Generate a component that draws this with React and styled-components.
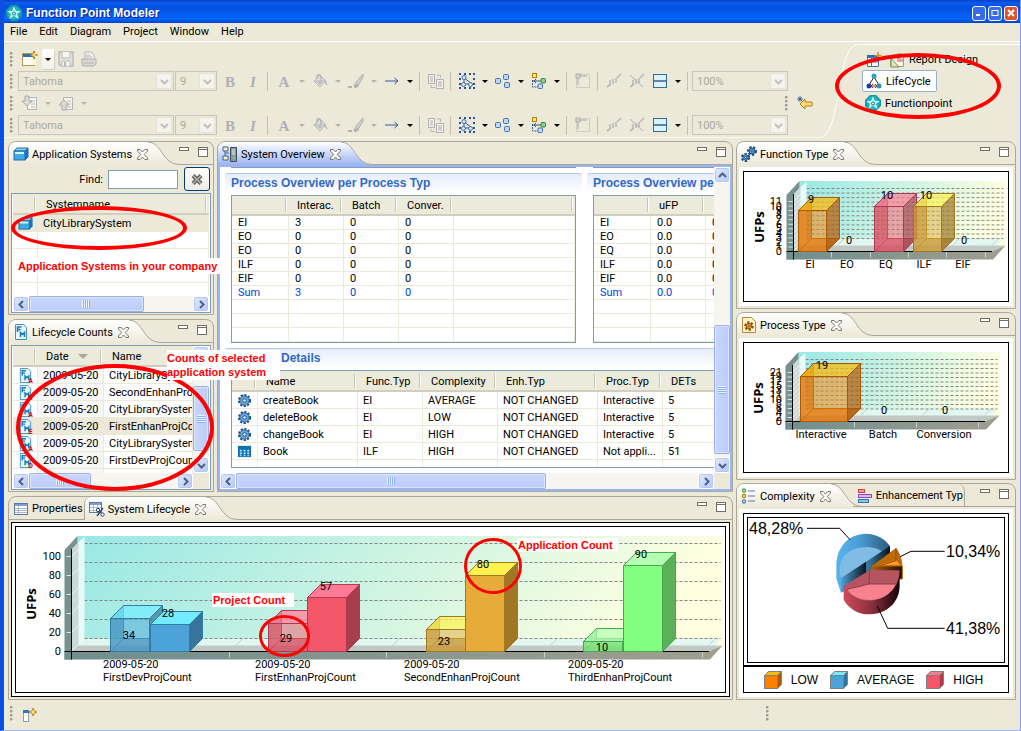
import styled, { createGlobalStyle, css } from 'styled-components';

const GlobalStyle = createGlobalStyle`
  *, *::before, *::after {
    box-sizing: border-box;
  }
  body {
    margin: 0;
    background: #ece9d8;
  }
  body, button, input, select, table {
    font-family: Roboto, 'Liberation Sans', Arial, sans-serif;
    font-size: 11px;
    color: #000;
  }
  button {
    padding: 0;
    border: 0;
    background: none;
  }
  svg {
    display: block;
    flex: none;
  }
  svg text {
    font-family: Roboto, 'Liberation Sans', Arial, sans-serif;
    font-size: 11px;
  }
`;

/* ---------- window ---------- */

const Window = styled.div`
  display: flex;
  flex-direction: column;
  min-height: 100vh;
  background: #ece9d8;
  border-left: 4px solid #0a4fe0;
  border-right: 1px solid #7c9cf0;
  border-bottom: 1px solid #9ab5f1;
  overflow: hidden;
`;

const TitleBar = styled.header`
  display: flex;
  align-items: center;
  gap: 4px;
  height: 23px;
  margin-left: -4px;
  padding: 3px 2px 0 6px;
  background: linear-gradient(#0a3fc4 0, #0a5cf0 3px, #0050dd 7px, #0458ea 12px, #0566ff 19px, #0043c8 23px);
`;

const TitleText = styled.h1`
  flex: 1;
  margin: 0;
  color: #fff;
  font: bold 12px 'Liberation Sans', Arial, sans-serif;
  text-shadow: 1px 1px #0a1883;
`;

const TitleButton = styled.button`
  display: grid;
  place-items: center;
  width: 14px;
  height: 15px;
  margin-left: -2px;
  border: 1px solid #fff;
  border-radius: 3px;
  background: ${({ $close }) => ($close ? '#e0512c' : '#3a6be8')};
`;

const MenuBar = styled.nav`
  display: flex;
  align-items: center;
  gap: 12px;
  height: 19px;
  padding-left: 6px;
  border-bottom: 1px solid #fff;
`;

const MenuItem = styled.button`
  line-height: 16px;
`;

/* ---------- tool bars ---------- */

const CoolBar = styled.div`
  display: flex;
  height: 99px;
`;

const Bars = styled.div`
  flex: 1;
  min-width: 0;
  margin-bottom: 3px;
  padding: 6px 4px 0 6px;
  border-bottom: 1px solid #f8f7f2;
`;

const BarRow = styled.div`
  display: flex;
  align-items: center;
  height: 22px;
`;

const Grip = styled.span`
  flex: none;
  width: 3px;
  height: 15px;
  margin-right: 5px;
  margin-left: ${({ $end }) => ($end ? 'auto' : '0')};
  background: radial-gradient(circle at 1px 1px, #a09d90 1px, transparent 2px) 0 0 / 3px 4px;
`;

const Tool = styled.button`
  display: grid;
  flex: none;
  place-items: center;
  width: ${({ $menu }) => ($menu ? '24px' : '23px')};
  height: 20px;
`;

const MenuArrow = styled.button`
  display: grid;
  flex: none;
  place-items: center;
  width: 12px;
  height: 20px;
  ${({ $raised }) =>
    $raised &&
    css`
      border-radius: 2px;
      background: linear-gradient(#fff, #f3f1e8);
      box-shadow: 1px 1px #d4d0c0;
    `}
`;

const Separator = styled.span`
  flex: none;
  width: 1px;
  height: 19px;
  margin: 0 4px 0 3px;
  background: #c5c2b0;
`;

const ComboBox = styled.span`
  position: relative;
  flex: none;
  width: ${({ $width }) => $width}px;
  height: 20px;
  margin-right: 1px;
`;

const ComboSelect = styled.select`
  width: 100%;
  height: 20px;
  padding: 0 18px 0 4px;
  appearance: none;
  color: #aca899;
  background: #ece9d8;
  border: 1px solid #c9c7ba;
  border-radius: 0;
  opacity: 1;
`;

const ComboArrow = styled.span`
  position: absolute;
  top: 2px;
  right: 2px;
  display: grid;
  place-items: center;
  width: 16px;
  height: 16px;
  border: 1px solid #e4e2d6;
  background: #f4f3ee;
  pointer-events: none;
`;

const Perspectives = styled.div`
  position: relative;
  flex: none;
  width: 162px;
  margin-top: 2px;
  padding: 4px;
  border-top: 1px solid #fff;
`;

const PerspectiveRow = styled.div`
  display: flex;
  align-items: center;
  gap: 4px;
  height: 21px;
  padding-left: 4px;
`;

const PerspectiveButton = styled.button`
  display: flex;
  align-items: center;
  gap: 4px;
  height: 22px;
  padding: 0 5px 0 3px;
  ${({ $active }) =>
    $active &&
    css`
      background: #fff;
      border: 1px solid #98b0cc;
      border-radius: 2px;
    `}
`;

/* ---------- workbench ---------- */

const Workbench = styled.main`
  display: flex;
  flex: 1;
  gap: 3px;
  padding: 0 4px;
`;

const MainArea = styled.div`
  display: flex;
  flex: 1;
  flex-direction: column;
  gap: 4px;
  min-width: 0;
`;

const TopRow = styled.div`
  display: flex;
  gap: 3px;
`;

const Navigator = styled.div`
  display: flex;
  flex: none;
  flex-direction: column;
  gap: 4px;
  width: 206px;
`;

const ChartColumn = styled.div`
  display: flex;
  flex: none;
  flex-direction: column;
  gap: 3px;
  width: 280px;
`;

const Panel = styled.section`
  position: relative;
  display: flex;
  flex: ${({ $grow }) => ($grow ? '1' : 'none')};
  flex-direction: column;
  min-width: 0;
  border: 1px solid #aca899;
  border-radius: 8px 8px 0 0;
`;

const PanelHead = styled.div`
  display: flex;
  flex: none;
  height: 23px;
`;

const blueTab = css`
  background: linear-gradient(#fff, #9ab5f1);
`;

const plainTab = css`
  background: linear-gradient(#fff, #ece9d8);
`;

const Tab = styled.div`
  display: flex;
  flex: none;
  align-items: center;
  padding: 1px 0 0 4px;
  border-top-left-radius: 7px;
  border-bottom: 1px solid #aca899;
  white-space: nowrap;
  ${({ $active, $blue }) =>
    $active &&
    css`
      ${$blue ? blueTab : plainTab}
      border-bottom: 0;
    `}
  ${({ $divided }) => $divided && 'border-left: 1px solid #aca899;'}
  ${({ $last }) => $last && 'margin-left: -9px; border-right: 1px solid #aca899; border-top-right-radius: 7px;'}
`;

const TabLabel = styled.span`
  padding: 0 ${({ $wide }) => ($wide ? 5 : 1)}px 0 3px;
`;

const CloseButton = styled.button`
  padding: 0;
`;

const HeadRest = styled.div`
  display: flex;
  flex: 1;
  gap: 9px;
  justify-content: flex-end;
  padding: 5px 6px 0 0;
  border-bottom: 1px solid #aca899;
`;

const MinButton = styled.button`
  width: 10px;
  height: 4px;
  border: 1px solid #716f64;
  background: #fff;
`;

const MaxButton = styled.button`
  width: 10px;
  height: 10px;
  border: 1px solid #716f64;
  border-top-width: 3px;
  border-top-style: double;
  background: #fff;
`;

const FindRow = styled.div`
  display: flex;
  align-items: center;
  justify-content: flex-end;
  height: 28px;
  padding-right: 3px;
`;

const FindInput = styled.input`
  width: 70px;
  height: 19px;
  margin: 0 6px 0 5px;
  border: 1px solid #7f9db9;
  background: #fff;
`;

const ClearButton = styled.button`
  display: grid;
  place-items: center;
  width: 26px;
  height: 24px;
  border: 1px solid #003c74;
  border-radius: 3px;
  background: linear-gradient(#fff, #ecebe5);
`;

/* ---------- tables ---------- */

const ListBox = styled.div`
  display: flex;
  flex-direction: column;
  height: ${({ $height }) => $height}px;
  margin: ${({ $gap }) => $gap}px 2px 1px;
  padding: 0 1px;
  border: 1px solid #7f9db9;
  background: #fff;
`;

const ListRow = styled.div`
  display: flex;
  flex: 1;
  min-height: 0;
`;

const ListClip = styled.div`
  flex: 1;
  min-width: 0;
  overflow: hidden;
`;

const ListFoot = styled.div`
  display: flex;
  flex: none;
  background: #ece9d8;
`;

const DataTable = styled.table`
  width: 100%;
  table-layout: fixed;
  border-collapse: separate;
  border-spacing: 0;
  white-space: nowrap;
`;

const Th = styled.th`
  height: ${({ $dense }) => ($dense ? 20 : 21)}px;
  padding: 2px 0 0 8px;
  overflow: hidden;
  font-weight: normal;
  line-height: 14px;
  text-align: left;
  background:
    linear-gradient(#c7c5b2, #c7c5b2) right 3px center / 1px 14px no-repeat,
    linear-gradient(#fff, #fff) right 2px center / 1px 14px no-repeat,
    #ebeadb;
  border-bottom: 2px solid #d2cebd;
`;

const Td = styled.td`
  height: ${({ $dense }) => ($dense ? 14 : 17)}px;
  padding: 1px 0 0 ${({ $dense }) => ($dense ? 6 : 5)}px;
  overflow: hidden;
  line-height: 12px;
  color: ${({ $sum }) => ($sum ? '#0046d5' : '#000')};
  background: ${({ $selected, $sorted }) => ($selected ? '#ece9d8' : $sorted ? '#f7f7f7' : '#fff')};
  border-right: 1px solid #ece9d8;
  border-bottom: 1px solid #ece9d8;

  svg {
    width: 15px;
    height: 15px;
  }
`;

const SortMark = styled.span`
  display: inline-block;
  margin-left: 9px;
  border: 5px solid transparent;
  border-top-color: #aca899;
  border-bottom: 0;
  vertical-align: middle;
`;

/* ---------- scroll bars ---------- */

const ScrollTrack = styled.div`
  display: flex;
  flex: ${({ $vertical }) => ($vertical ? 'none' : '1')};
  flex-direction: ${({ $vertical }) => ($vertical ? 'column' : 'row')};
  ${({ $vertical }) => ($vertical ? 'width' : 'height')}: 16px;
  min-width: 0;
  background: #f6f5f0;
`;

const ScrollButton = styled.button`
  display: grid;
  flex: none;
  place-items: center;
  width: 16px;
  height: 16px;
  border: 1px solid #fff;
  border-radius: 3px;
  background: linear-gradient(135deg, #e1eafe, #b5c8f7);
  box-shadow: inset 0 0 0 1px #b4c8f6;
`;

const ScrollLane = styled.div`
  display: flex;
  flex: 1;
  flex-direction: ${({ $vertical }) => ($vertical ? 'column' : 'row')};
  min-height: 0;
`;

const ScrollSpace = styled.span`
  flex: 0 0 ${({ $size }) => $size}%;
`;

const ScrollThumb = styled.div`
  display: grid;
  flex: 0 0 ${({ $size }) => $size}%;
  place-items: center;
  border: 1px solid #98b1ea;
  border-radius: 2px;
  background: linear-gradient(${({ $vertical }) => ($vertical ? '90deg' : '180deg')}, #c9d7fd, #bccbf9);
  box-shadow: inset 0 0 0 1px #dbe5ff;
`;

const ThumbGrip = styled.span`
  width: 8px;
  height: 8px;
  background: repeating-linear-gradient(
    ${({ $vertical }) => ($vertical ? '180deg' : '90deg')},
    #eef4fe 0 1px,
    #8cb0f8 1px 2px
  );
`;

/* ---------- editor ---------- */

const EditorBody = styled.div`
  display: flex;
  flex: 1;
  flex-direction: column;
  border: 2px solid #9ab5f1;
  background: #fff;
`;

const EditorMain = styled.div`
  display: flex;
  flex: 1;
  min-height: 0;
`;

const EditorPage = styled.div`
  flex: 1;
  min-width: 0;
  height: 306px;
  padding-left: 5px;
  overflow: hidden;
`;

const SectionRow = styled.div`
  display: flex;
  gap: 5px;
`;

const FormSection = styled.div`
  flex: none;
  width: ${({ $width }) => $width}px;
  margin-bottom: 5px;
`;

const PreviousEdge = styled.div`
  height: 1px;
  margin: 0 6px 5px;
  background: #7f9db9;
`;

const SectionTitle = styled.h2`
  height: 20px;
  margin: 0 0 2px;
  padding: 2px 0 0 6px;
  border-top: 1px solid #b5c8f4;
  border-radius: 3px 3px 0 0;
  background: linear-gradient(#e6edfc, #fff);
  color: #316ac5;
  font: bold 12px 'Liberation Sans', Arial, sans-serif;
  line-height: 15px;
  white-space: nowrap;
`;

const SectionTable = styled.div`
  height: ${({ $height }) => $height}px;
  margin: 0 6px;
  border: 1px solid #7f9db9;
  overflow: hidden;
`;

const ScrollCorner = styled.span`
  flex: none;
  width: 16px;
  background: #ece9d8;
`;

/* ---------- charts ---------- */

const ChartPaper = styled.div`
  margin: 2px;
  padding: ${({ $tight }) => ($tight ? '0' : '4px')};
  background: #fff;
`;

const Frame = styled.div`
  padding: ${({ $double }) => ($double ? '3px' : '0')};
  border: 1px solid #000;
`;

const InnerFrame = styled.div`
  border: 1px solid #000;
`;

const PieFrame = styled.div`
  border: 1px solid #000;
`;

const PieArea = styled.div`
  padding: 3px 3px 2px;
  border-bottom: 2px solid #000;
`;

const ChartSvg = styled.svg`
  width: 100%;
  height: ${({ $height }) => $height}px;
`;

const Legend = styled.ul`
  display: flex;
  align-items: center;
  justify-content: center;
  gap: 12px;
  height: 25px;
  margin: 0;
  padding: 0 5px 0 0;
  list-style: none;
`;

const LegendItem = styled.li`
  display: flex;
  align-items: center;
  gap: 9px;
  font: 12px 'Liberation Sans', Arial, sans-serif;
`;

/* ---------- annotations ---------- */

const Ring = styled.span`
  position: absolute;
  z-index: 4;
  left: ${({ $x }) => $x}px;
  top: ${({ $y }) => $y}px;
  width: ${({ $w }) => $w}px;
  height: ${({ $h }) => $h}px;
  border: 4px solid #f00;
  border-radius: 50%;
  pointer-events: none;
`;

const Note = styled.p`
  position: absolute;
  z-index: 5;
  left: ${({ $x }) => $x}px;
  top: ${({ $y }) => $y}px;
  margin: 0;
  padding: 1px 14px 1px ${({ $indent }) => $indent || 0}px;
  background: #fff;
  color: #f00;
  font: bold 11px 'Liberation Sans', Arial, sans-serif;
  line-height: 14px;
  white-space: nowrap;
`;

const StatusBar = styled.footer`
  display: flex;
  height: 30px;
  padding: 6px 0 0 6px;
`;

const StatusLeft = styled.div`
  display: flex;
  flex: 1;
`;

const StatusRight = styled.div`
  width: 254px;
`;

/* ---------- icons ---------- */

const Icon = ({ size = 16, children }) => (
  <svg width={size} height={size} viewBox='0 0 16 16' fill='none' aria-hidden='true'>
    {children}
  </svg>
);

const LogoIcon = () => (
  <Icon>
    <path d='M5 0h6l5 5v6l-5 5H5l-5-5V5z' fill='#1797a6' />
    <circle cx='8' cy='8' r='6.400' fill='#20b6c4' />
    <path d='M8 3l-3.500 9.500L13 6.500H3l8.500 6z' fill='none' stroke='#d8ffff' strokeWidth='1.200' />
    <circle cx='8' cy='8.500' r='1.500' fill='#e5ffff' stroke='#087888' />
  </Icon>
);

const NewIcon = () => (
  <Icon>
    <rect x='.5' y='2.500' width='12' height='12' fill='#fdfdf5' stroke='#b29a55' />
    <path d='M1 3h12v3H1z' fill='#2a72bd' />
    <path d='M12 0v8M8.500 4h7' stroke='#c08a10' strokeWidth='2' />
    <path d='M12 2v4M10 4h4' stroke='#ffe98a' />
    <path d='M10 14V9l4-1v6' fill='#fff6cf' />
  </Icon>
);

const SaveIcon = () => (
  <Icon>
    <path d='M1 1h14v14H3l-2-2z' fill='#e3e2dc' stroke='#b8b8b8' strokeWidth='1.400' />
    <path d='M4 1v6h8V1M4 15v-5h8v5' fill='#f5f4ef' stroke='#bbb' />
    <path d='M6 11h2v4H6z' fill='#b5b5b5' />
  </Icon>
);

const PrintIcon = () => (
  <Icon>
    <path d='M4 8V1h6l3 3v4' fill='#f5f4ef' stroke='#b5b5b5' />
    <path d='M1 8h14v5l-2 2H2l-1-1z' fill='#d8d7d0' stroke='#b0b0b0' />
    <path d='M3 12h10M5 4h4M5 6h6' stroke='#b5b5b5' />
  </Icon>
);

const Letter = ({ italic, children }) => (
  <Icon>
    <text
      x='8'
      y='13.500'
      textAnchor='middle'
      fill='#b0b0b4'
      style={{ font: `${italic ? 'italic ' : ''}bold 15px "Liberation Serif", serif` }}
    >
      {children}
    </text>
  </Icon>
);

const BucketIcon = () => (
  <Icon>
    <path d='M2 8l6-6 6 6-6 6z' fill='#dfded8' stroke='#b8b8b8' />
    <path d='M5 6c-1-5 3-6 4-2v4M3 8h10l2 4' stroke='#b0b0b0' strokeWidth='1.200' />
    <path d='M5 9h6l-3 3z' fill='#bbb' />
  </Icon>
);

const BrushIcon = () => (
  <Icon>
    <path d='M15 1L9 8l-3 5 5-2 4-7z' fill='#d0d0cc' stroke='#b0b0b0' />
    <path d='M0 14h4M6 14c2 0 4-1 4-3' stroke='#b0b0b0' strokeWidth='2' />
  </Icon>
);

const LineIcon = () => (
  <Icon>
    <path d='M1 8h13M10.500 5l3.500 3-3.500 3' stroke='#2c5ba8' />
  </Icon>
);

const CopyIcon = () => (
  <Icon>
    <path d='M.5 1.500h6v9h-6zM8.500 6.500h7v9h-7z' fill='#f3f2ec' stroke='#b0b0b0' />
    <path d='M2 4h3M2 6h3M2 8h3M10 9h4M10 11h4M10 13h4' stroke='#b0b0b0' />
    <path d='M9 2h3.500v3M3 12v2.500h4' stroke='#b8b8b8' />
  </Icon>
);

const SelectAllIcon = () => (
  <Icon>
    <path
      d='M0 0h2v2H0zM5 0h2v2H5zM10 0h2v2h-2zM14 0h2v2h-2zM0 5h2v2H0zM14 5h2v2h-2zM0 10h2v2H0zM14 10h2v2h-2zM0 14h2v2H0zM5 14h2v2H5zM10 14h2v2h-2zM14 14h2v2h-2z'
      fill='#2f5594'
    />
    <path d='M4 4l9 7M5 5v6h6' stroke='#2f5594' />
    <circle cx='5' cy='4.500' r='2' fill='#d5e6fb' stroke='#4470b0' />
    <circle cx='4.500' cy='11.500' r='2' fill='#d5e6fb' stroke='#4470b0' />
    <circle cx='11.500' cy='11.500' r='2' fill='#d5e6fb' stroke='#4470b0' />
  </Icon>
);

const AlignIcon = () => (
  <Icon>
    <g fill='#bcd6f5' stroke='#4470b0'>
      <rect x='.5' y='5.500' width='5' height='5' rx='1' />
      <rect x='8.500' y='1.500' width='5' height='5' rx='1' />
      <rect x='9.500' y='9.500' width='5' height='5' rx='1' />
    </g>
  </Icon>
);

const TreeIcon = () => (
  <Icon>
    <rect x='1.500' y='.5' width='4' height='4' fill='#ffe07c' stroke='#b08410' />
    <path d='M2 8h8M5 6L3 8l2 2' stroke='#2f5594' />
    <path d='M1.500 7v7h6' stroke='#2f5594' strokeDasharray='2 1' />
    <rect x='10' y='5.500' width='4.500' height='4.500' rx='1' fill='#8fd08a' stroke='#3c8040' />
    <rect x='7' y='11' width='4.500' height='4.500' rx='1' fill='#c6dcf8' stroke='#4470b0' />
  </Icon>
);

const SnapIcon = () => (
  <Icon>
    <rect x='1.500' y='1.500' width='13' height='13' stroke='#b5b5b5' strokeDasharray='1 1' />
    <path d='M3 4v8M4 3h8' stroke='#a9a9a9' />
    <rect x='1' y='1' width='4' height='4' fill='#d5d5d0' stroke='#b0b0b0' />
  </Icon>
);

const RouteIcon = ({ crossed }) => (
  <Icon>
    <path d='M1 14l4-3M11 5l4-4M4 7v5M7 6v5M10 5v5' stroke='#b8b8b8' strokeWidth='1.600' />
    {crossed && <path d='M1 2l13 12' stroke='#b0b0b0' />}
  </Icon>
);

const RowsIcon = () => (
  <Icon>
    <rect x='1.500' y='1.500' width='13' height='13' fill='#d9f2fc' stroke='#3b6a96' />
    <path d='M1 8h14' stroke='#3b6a96' strokeWidth='1.600' />
  </Icon>
);

const PageArrowIcon = ({ up }) => (
  <Icon>
    <rect x='5.500' y='2.500' width='9' height='12' fill='#f5f4ef' stroke='#b5b5b5' />
    <path d='M9 6h4M9 9h4M9 12h4' stroke='#b8b8b8' />
    <path
      d={up ? 'M6 5l5 5H8v5H4v-5H1z' : 'M3 1h4v5h3l-5 5-5-5h3z'}
      fill='#dddcd5'
      stroke='#a9a9a9'
    />
  </Icon>
);

const BackIcon = () => (
  <Icon>
    <path d='M3 9l5-5v3h7v4H8v3z' fill='#ffdf82' stroke='#bd7b08' />
    <path d='M3 1v6M0 4h6M1 2l4 4M5 2L1 6' stroke='#2a568e' strokeWidth='.8' />
  </Icon>
);

const DropArrow = ({ muted }) => (
  <svg width='6' height='3' viewBox='0 0 6 3' aria-hidden='true'>
    <path d='M0 0h6L3 3z' fill={muted ? '#b8b5a8' : '#000'} />
  </svg>
);

const turns = { up: 180, down: 0, left: 90, right: -90 };

const Chevron = ({ dir = 'down', color = '#4d6185' }) => (
  <svg width='9' height='9' viewBox='0 0 9 9' fill='none' aria-hidden='true'>
    <path d='M1 3l3.500 3.500L8 3' stroke={color} strokeWidth='2' transform={`rotate(${turns[dir]} 4.500 4.500)`} />
  </svg>
);

const CloseIcon = () => (
  <svg width='11' height='11' viewBox='0 0 11 11' aria-hidden='true'>
    <path
      d='M.5 .5h2.700L5.500 3 7.800 .5h2.700v1.500L7.200 5.500l3.300 3.500v1.500H7.800L5.500 8l-2.300 2.500H.5V9l3.300-3.500L.5 2z'
      fill='#fff'
      stroke='#77756b'
    />
  </svg>
);

const SystemsIcon = () => (
  <Icon>
    <path d='M1 5l3-3h11l-3 3z' fill='#8fd4f6' stroke='#1a6cab' />
    <path d='M12 5l3-3v9l-3 3z' fill='#1c78b8' stroke='#1a6cab' />
    <rect x='1' y='5' width='11' height='9' fill='#3fa9e2' stroke='#1a6cab' />
    <path d='M2 6h9v2H2z' fill='#d8f3ff' />
  </Icon>
);

const CountIcon = ({ tag }) => (
  <Icon>
    <path d='M2.500 .5h8l3 3v12h-11z' fill='#eaf6fd' stroke='#3d91c6' />
    <path d='M4.500 8V3h4M4.500 5.500h3M7.500 13V8.500l2 2 2-2V13' stroke='#1578ba' strokeWidth='1.500' />
    {tag && (
      <text x='11' y='16' fill='#e00' style={{ font: 'bold 7px "Liberation Sans"' }}>
        {tag}
      </text>
    )}
  </Icon>
);

const OverviewIcon = () => (
  <Icon>
    <path d='M1 1h5v4H1zM1 10h5v4H1z' fill='#fff0a8' stroke='#3566a0' />
    <path d='M3 5v5M3 7h4' stroke='#3566a0' />
    <path d='M8.500 1.500h6v14h-6z' fill='#8f97a6' stroke='#454b58' />
    <path d='M10 4h3M10 6h3M10 8h3' stroke='#e8ebf0' />
    <circle cx='12' cy='12' r='1' fill='#60e060' />
  </Icon>
);

const GearShape = ({ cx = 8, cy = 8, r = 5, fill = '#6ea6d8', stroke = '#174f86' }) => (
  <g>
    <circle cx={cx} cy={cy} r={r + 1} fill='none' stroke={stroke} strokeWidth='2' strokeDasharray='2.300 1.600' />
    <circle cx={cx} cy={cy} r={r} fill={fill} stroke={stroke} />
    <circle cx={cx} cy={cy} r={r / 2.6} fill='#d2ecfa' stroke={stroke} />
  </g>
);

const GearIcon = () => (
  <Icon>
    <GearShape />
  </Icon>
);

const GearsIcon = () => (
  <Icon>
    <GearShape cx={11} cy={5} r={3} />
    <GearShape cx={4.5} cy={11.5} r={2.6} />
  </Icon>
);

const ProcessIcon = () => (
  <Icon>
    <path d='M1.500 .5h9l4 4v11h-13z' fill='#fff3cf' stroke='#b58935' />
    <GearShape cy={9} r={2.8} fill='#f3b63c' stroke='#8a5205' />
  </Icon>
);

const TableIcon = () => (
  <Icon>
    <rect x='1' y='2' width='14' height='12' fill='#0e70b4' />
    <path d='M3 6h2v2H3zM7 6h2v2H7zM11 6h2v2h-2zM3 9h2v2H3zM7 9h2v2H7zM11 9h2v2h-2zM3 12h2v1H3zM7 12h2v1H7zM11 12h2v1h-2z' fill='#c8eeff' />
  </Icon>
);

const PropertiesIcon = () => (
  <Icon>
    <rect x='1.500' y='2.500' width='13' height='11' fill='#fff' stroke='#5c7ba4' />
    <path d='M2 3h12v2H2z' fill='#7f9fce' />
    <path d='M2 7.500h12M2 9.500h12M2 11.500h12M5.500 5v8' stroke='#a9b9d0' />
  </Icon>
);

const LifecycleTabIcon = () => (
  <Icon>
    <rect x='.5' y='1.500' width='12' height='10' fill='#fff' stroke='#5c7ba4' />
    <path d='M1 2h11v2H1z' fill='#7f9fce' />
    <path d='M1 6.500h11M1 9.500h11M4.500 4v7M8.500 4v7' stroke='#a9b9d0' />
    <path d='M8 15l6-8' stroke='#24406f' strokeWidth='1.300' />
    <circle cx='9' cy='9' r='1.700' fill='#fff' stroke='#24406f' />
    <circle cx='13.500' cy='13.500' r='1.700' fill='#fff' stroke='#24406f' />
  </Icon>
);

const ComplexityIcon = () => (
  <Icon>
    <circle cx='3' cy='2.500' r='1.800' fill='#9bd69b' stroke='#4c944c' />
    <circle cx='3' cy='8' r='1.800' fill='#ffd34a' stroke='#a07805' />
    <circle cx='3' cy='13.500' r='1.800' fill='#a6cdf4' stroke='#3f6fae' />
    <path d='M7 3h7M7 8h7M7 13h7' stroke='#5876b8' />
  </Icon>
);

const EnhancementIcon = () => (
  <Icon>
    <rect x='1.500' y='1.500' width='6' height='3' fill='#f7a0a0' stroke='#d04040' />
    <rect x='1.500' y='6.500' width='13' height='3' fill='#d6b5f3' stroke='#8a4dc4' />
    <rect x='1.500' y='11.500' width='10' height='3' fill='#8fc4ec' stroke='#2f78b4' />
  </Icon>
);

const OpenPerspectiveIcon = () => (
  <Icon>
    <path d='M1.500 3.500h11v11h-11z' fill='#fdfdf5' stroke='#4b6fa0' />
    <path d='M1 3h12v3H1z' fill='#2a72bd' />
    <path d='M5.500 6v8M6 10h7' stroke='#4b6fa0' />
    <path d='M12 0v7M9 3.500h6.500' stroke='#c79a1f' strokeWidth='1.600' />
  </Icon>
);

const ReportIcon = () => (
  <Icon>
    <path d='M1.500 3.500l10-2 3 3v10h-13z' fill='#fbf8ea' stroke='#a29a78' />
    <path d='M2 6l8 9H2z' fill='#dfe6c8' stroke='#7c8c58' />
    <path d='M9 6v4M11 4v6M13 7v3' stroke='#d04848' />
  </Icon>
);

const LifeCycleIcon = () => (
  <Icon>
    <path d='M8 4L3 12M8 4l5 8' stroke='#222' />
    <path d='M5 13h6M7 11l-2 2 2 2M9 11l2 2-2 2' stroke='#d01818' />
    <circle cx='8' cy='3' r='2.500' fill='#28a6b8' />
    <circle cx='3' cy='13' r='2.500' fill='#1f3fa0' />
    <circle cx='13' cy='13' r='2.500' fill='#2a98b0' />
  </Icon>
);

const StatusIcon = () => (
  <Icon>
    <rect x='1.500' y='2.500' width='5' height='11' fill='#fff' stroke='#8b9fae' />
    <path d='M1 2h6v3H1z' fill='#3378bf' />
    <path d='M11 0l1.200 2.800L15 4l-2.800 1.200L11 8 9.800 5.200 7 4l2.800-1.200z' fill='#ffe27d' stroke='#b48a1c' />
  </Icon>
);

/* ---------- shared parts ---------- */

const TabCurve = ({ blue }) => {
  const id = blue ? 'curve-blue' : 'curve-plain';
  return (
    <svg width='31' height='23' viewBox='0 0 31 23' aria-hidden='true'>
      <defs>
        <linearGradient id={id} x1='0' y1='0' x2='0' y2='23' gradientUnits='userSpaceOnUse'>
          <stop offset='0' stopColor='#fff' />
          <stop offset='1' stopColor={blue ? '#9ab5f1' : '#ece9d8'} />
        </linearGradient>
      </defs>
      <path d='M0 0C14 0 14 22.500 31 22.500V23H0z' fill={`url(#${id})`} />
      <path d='M0 0C14 0 14 22.500 31 22.500' fill='none' stroke='#aca899' />
    </svg>
  );
};

const ActiveTab = ({ icon, label, blue, divided }) => (
  <>
    <Tab $active $blue={blue} $divided={divided}>
      {icon}
      <TabLabel $wide>{label}</TabLabel>
      <CloseButton aria-label={`Close ${label}`}>
        <CloseIcon />
      </CloseButton>
    </Tab>
    <TabCurve blue={blue} />
  </>
);

const HeadButtons = () => (
  <HeadRest>
    <MinButton aria-label='Minimize' />
    <MaxButton aria-label='Maximize' />
  </HeadRest>
);

const ScrollBar = ({ vertical, start = 0, size }) => (
  <ScrollTrack $vertical={vertical}>
    <ScrollButton aria-label={vertical ? 'Scroll up' : 'Scroll left'}>
      <Chevron dir={vertical ? 'up' : 'left'} />
    </ScrollButton>
    <ScrollLane $vertical={vertical}>
      <ScrollSpace $size={start} />
      <ScrollThumb $vertical={vertical} $size={size}>
        <ThumbGrip $vertical={vertical} />
      </ScrollThumb>
    </ScrollLane>
    <ScrollButton aria-label={vertical ? 'Scroll down' : 'Scroll right'}>
      <Chevron dir={vertical ? 'down' : 'right'} />
    </ScrollButton>
  </ScrollTrack>
);

const Grid = ({ columns, rows, dense, selected, sumRow, sorted }) => (
  <DataTable>
    <colgroup>
      {columns.map((column, i) => (
        <col key={i} width={column.width} />
      ))}
    </colgroup>
    <thead>
      <tr>
        {columns.map((column, i) => (
          <Th key={i} $dense={dense}>
            {column.label}
            {sorted === i && <SortMark />}
          </Th>
        ))}
      </tr>
    </thead>
    <tbody>
      {rows.map((row, r) => (
        <tr key={r}>
          {columns.map((column, i) => (
            <Td key={i} $dense={dense} $selected={selected === r} $sum={sumRow === r} $sorted={sorted === i}>
              {row[i]}
            </Td>
          ))}
        </tr>
      ))}
    </tbody>
  </DataTable>
);

const Combo = ({ label, value, width }) => (
  <ComboBox $width={width}>
    <ComboSelect aria-label={label} disabled>
      <option>{value}</option>
    </ComboSelect>
    <ComboArrow>
      <Chevron color='#c3c1b4' />
    </ComboArrow>
  </ComboBox>
);

const ToolMenu = ({ label, icon, muted, raised }) => (
  <>
    <Tool $menu aria-label={label}>
      {icon}
    </Tool>
    <MenuArrow $raised={raised} aria-label={`${label} menu`}>
      <DropArrow muted={muted} />
    </MenuArrow>
  </>
);

const FormatBar = () => (
  <BarRow>
    <Grip />
    <Combo label='Font' value='Tahoma' width={156} />
    <Combo label='Font size' value='9' width={42} />
    <Tool aria-label='Bold'>
      <Letter>B</Letter>
    </Tool>
    <Tool aria-label='Italic'>
      <Letter italic>I</Letter>
    </Tool>
    <Separator />
    <ToolMenu label='Font color' icon={<Letter>A</Letter>} muted />
    <ToolMenu label='Fill color' icon={<BucketIcon />} muted />
    <ToolMenu label='Line color' icon={<BrushIcon />} muted />
    <ToolMenu label='Line style' icon={<LineIcon />} />
    <Separator />
    <Tool aria-label='Copy appearance'>
      <CopyIcon />
    </Tool>
    <Separator />
    <ToolMenu label='Select' icon={<SelectAllIcon />} />
    <ToolMenu label='Arrange' icon={<AlignIcon />} />
    <ToolMenu label='Align' icon={<TreeIcon />} />
    <Separator />
    <Tool aria-label='Auto size'>
      <SnapIcon />
    </Tool>
    <Separator />
    <Tool aria-label='Show labels'>
      <RouteIcon />
    </Tool>
    <Tool aria-label='Hide labels'>
      <RouteIcon crossed />
    </Tool>
    <ToolMenu label='Compartments' icon={<RowsIcon />} />
    <Separator />
    <Combo label='Zoom' value='100%' width={96} />
  </BarRow>
);

/* ---------- 3D bar charts ---------- */

const palette = {
  blue: { front: '#4ba3da', top: '#73ecff', side: '#36749b', line: '#2f7ea8' },
  red: { front: '#f35669', top: '#ff7b95', side: '#a83d4b', line: '#b03a55' },
  gold: { front: '#e6ab38', top: '#fff24f', side: '#a07724', line: '#a07a1c' },
  green: { front: '#82ff7f', top: '#b4ffb4', side: '#59b159', line: '#4ba651' },
  orange: { front: '#ff7f00', top: '#ffb800', side: '#b25900', line: '#b05800' },
};

const Bar = ({ x, width, top, base, depth = 13, color, ghost }) => {
  const c = palette[color];
  const right = x + width;
  return (
    <g stroke={c.line} strokeLinejoin='round'>
      {ghost && (
        <>
          <path
            d={`M${x} ${base}l${depth} ${-depth}h${width}l${-depth} ${depth}z`}
            fill={c.side}
            fillOpacity='.6'
          />
          <path d={`M${x} ${base}V${top}l${depth} ${-depth}V${base - depth}z`} fill={c.side} fillOpacity='.6' />
        </>
      )}
      <rect x={x} y={top} width={width} height={base - top} fill={c.front} fillOpacity={ghost ? 0.5 : 1} />
      <path
        d={`M${x} ${top}l${depth} ${-depth}h${width}l${-depth} ${depth}z`}
        fill={c.top}
        fillOpacity={ghost ? 0.7 : 1}
      />
      <path
        d={`M${right} ${base}V${top}l${depth} ${-depth}V${base - depth}z`}
        fill={c.side}
        fillOpacity={ghost ? 0.7 : 1}
      />
    </g>
  );
};

/* left: outer edge of the wall, end: right edge of the floor front, back: right edge of the rear wall */
const Room = ({ id, left, end, back, roof, base, lines, ticks }) => (
  <g>
    <defs>
      <linearGradient id={`${id}-wall`} x1='0' y1='0' x2='1' y2='.15'>
        <stop offset='0' stopColor='#98e8e5' />
        <stop offset='1' stopColor='#ffffe0' />
      </linearGradient>
      <linearGradient id={`${id}-base`} x1='0' x2='1'>
        <stop offset='0' stopColor='#6f8f8e' />
        <stop offset='1' stopColor='#a09f8e' />
      </linearGradient>
    </defs>
    <path d={`M${left + 13} ${roof}H${back}V${base - 6}H${left + 13}z`} fill={`url(#${id}-wall)`} />
    <path d={`M${left} ${roof + 14}l13 -14v7l-6 7V${base + 8}h-7z`} fill='#76918e' />
    <path d={`M${left + 7} ${roof + 13}l13 -12V${base - 13}l-13 13z`} fill='#cbd9d8' />
    <path d={`M${left + 14} ${roof + 6}l6 -5V${base - 13}l-6 6z`} fill='#e4fbfa' />
    <path d={`M${left + 7} ${base}l13 -13H${back - 2}l-6 7H${end}z`} fill='#e2f7f0' />
    <path d={`M${left + 7} ${base}l6 -6H${back}l-13 6z`} fill='#c2c9c5' />
    <path d={`M${left} ${base}H${end}L${back} ${base - 6}L${end + 1} ${base + 8}H${left}z`} fill={`url(#${id}-base)`} />
    {lines.map((y) => (
      <g key={y}>
        <path d={`M${left + 20} ${y}H${back - 2}`} stroke='#83858a' strokeDasharray='3 2' />
        <path d={`M${left + 2} ${y + 13}h5l13 -13`} fill='none' stroke='#f2fafa' strokeOpacity='.8' />
      </g>
    ))}
    {ticks.map((x) => (
      <path key={x} d={`M${x} ${base + 6}v-6M${x + 6} ${base - 6}l7 -7`} stroke='#c9cfcb' />
    ))}
    <path d={`M${left + 7} ${roof + 13}V${base + 8}M${left} ${base}H${end}`} stroke='#000' />
  </g>
);

const AxisTitle = ({ x, y }) => (
  <text
    transform={`translate(${x} ${y}) rotate(-90)`}
    textAnchor='middle'
    style={{ font: 'bold 13px "Open Sans", sans-serif' }}
  >
    UFPs
  </text>
);

const lifecycleBars = [
  { x: 110.5, top: 618.5, value: 34, labelX: 129, labelY: 639, color: 'blue', ghost: true },
  { x: 150.5, top: 624.5, value: 28, labelX: 168, labelY: 617, color: 'blue' },
  { x: 268.5, top: 623.5, value: 29, labelX: 286, labelY: 642, color: 'red', ghost: true },
  { x: 307.5, top: 597.5, value: 57, labelX: 326, labelY: 590, color: 'red' },
  { x: 426.5, top: 629.5, value: 23, labelX: 444, labelY: 645, color: 'gold', ghost: true },
  { x: 465.5, top: 575.5, value: 80, labelX: 483, labelY: 568, color: 'gold' },
  { x: 583.5, top: 641.5, value: 10, labelX: 602, labelY: 651, color: 'green', ghost: true },
  { x: 623.5, top: 565.5, value: 90, labelX: 641, labelY: 558, color: 'green' },
];

const lifecycleNames = [
  [103, 'FirstDevProjCount'],
  [255, 'FirstEnhanProjCount'],
  [404, 'SecondEnhanProjCount'],
  [568, 'ThirdEnhanProjCount'],
];

const redNote = { font: 'bold 11px "Liberation Sans", Arial, sans-serif' };

const LifecycleChart = () => (
  <ChartSvg $height={165} viewBox='16 527 709 165' role='img' aria-label='System lifecycle chart'>
    <Room
      id='life'
      left={64.5}
      end={709}
      back={722.5}
      roof={536}
      base={651.5}
      lines={[543.5, 562.5, 581.5, 600.5, 619.5, 638.5]}
      ticks={[229.5, 386.5, 544.5, 702.5]}
    />
    {[100, 80, 60, 40, 20, 0].map((value, i) => (
      <text key={value} x='61' y={560 + i * 19} textAnchor='end'>
        {value}
      </text>
    ))}
    <AxisTitle x={36} y={604} />
    {lifecycleBars.map((bar) => (
      <Bar key={bar.x} x={bar.x} top={bar.top} width={39} base={651.5} color={bar.color} ghost={bar.ghost} />
    ))}
    {lifecycleBars.map((bar) => (
      <text key={bar.x} x={bar.labelX} y={bar.labelY} textAnchor='middle'>
        {bar.value}
      </text>
    ))}
    {lifecycleNames.map(([x, name]) => (
      <g key={name}>
        <text x={x} y='668'>
          2009-05-20
        </text>
        <text x={x} y='681'>
          {name}
        </text>
      </g>
    ))}
    <rect x='212' y='593' width='82' height='14' fill='#fff' />
    <rect x='517' y='538' width='101' height='14' fill='#fff' />
    <text x='213' y='604' fill='#f00' style={redNote}>
      Project Count
    </text>
    <text x='518' y='549' fill='#f00' style={redNote}>
      Application Count
    </text>
    <g fill='none' stroke='#f00' strokeWidth='3'>
      <ellipse cx='284.500' cy='636' rx='24' ry='19.500' />
      <ellipse cx='493' cy='566' rx='27.500' ry='26.500' />
    </g>
  </ChartSvg>
);

const steps = (from, gap, count) => Array.from({ length: count }, (_, i) => from + i * gap);

const FunctionChart = () => (
  <ChartSvg $height={129} viewBox='744 172 264 129' role='img' aria-label='Function type chart'>
    <Room
      id='func'
      left={786.5}
      end={992}
      back={1005.5}
      roof={181}
      base={251.5}
      lines={steps(188.5, 4.55, 12)}
      ticks={[831.5, 870.5, 908.5, 946.5, 985.5]}
    />
    {steps(0, 1, 12).map((value) => (
      <text key={value} x='782' y={255 - value * 4.55} textAnchor='end'>
        {value}
      </text>
    ))}
    <AxisTitle x={764} y={227} />
    <Bar x={798.5} width={28} top={210.5} base={251.5} color='orange' ghost />
    <Bar x={874.5} width={29} top={206.5} base={251.5} color='red' ghost />
    <Bar x={913.5} width={28} top={206.5} base={251.5} color='gold' ghost />
    <g textAnchor='middle'>
      <text x='811' y='203'>9</text>
      <text x='849' y='244'>0</text>
      <text x='887' y='199'>10</text>
      <text x='926' y='199'>10</text>
      <text x='964' y='244'>0</text>
      <text x='810' y='268'>EI</text>
      <text x='847' y='268'>EO</text>
      <text x='886' y='268'>EQ</text>
      <text x='924' y='268'>ILF</text>
      <text x='963' y='268'>EIF</text>
    </g>
  </ChartSvg>
);

const ProcessChart = () => (
  <ChartSvg $height={129} viewBox='744 343 264 129' role='img' aria-label='Process type chart'>
    <Room
      id='proc'
      left={785.5}
      end={985}
      back={999.5}
      roof={352}
      base={421.5}
      lines={steps(359.5, 4.5, 12)}
      ticks={[854.5, 916.5, 978.5]}
    />
    {[0, 2, 4, 6, 8, 10, 11, 13, 15, 17, 19, 21].map((value, i) => (
      <text key={value} x='782' y={425 - i * 4.5} textAnchor='end'>
        {value}
      </text>
    ))}
    <AxisTitle x={763} y={398} />
    <Bar x={800.5} width={47} top={376.5} base={421.5} color='orange' ghost />
    <g textAnchor='middle'>
      <text x='822' y='369'>19</text>
      <text x='884' y='414'>0</text>
      <text x='945' y='414'>0</text>
      <text x='821' y='438'>Interactive</text>
      <text x='883' y='438'>Batch</text>
      <text x='944' y='438'>Conversion</text>
    </g>
  </ChartSvg>
);

const percentFont = { font: '16px "Liberation Sans", Arial, sans-serif' };

const PieChart = () => (
  <ChartSvg $height={144} viewBox='748 516 256 144' role='img' aria-label='Complexity chart'>
    <defs>
      <linearGradient id='pie-blue' x1='0' x2='1'>
        <stop offset='0' stopColor='#58b4ee' />
        <stop offset='.4' stopColor='#4a9fd6' />
        <stop offset='1' stopColor='#2f5c7c' />
      </linearGradient>
      <linearGradient id='pie-cut' x1='0' x2='1'>
        <stop offset='0' stopColor='#4a9fd6' />
        <stop offset='.5' stopColor='#0d1720' />
        <stop offset='.52' stopColor='#3f7fa8' />
        <stop offset='1' stopColor='#081018' />
      </linearGradient>
      <linearGradient id='pie-red' x1='0' x2='1'>
        <stop offset='0' stopColor='#cf4a5c' />
        <stop offset='.5' stopColor='#8a303d' />
        <stop offset='1' stopColor='#120406' />
      </linearGradient>
      <linearGradient id='pie-orange' x1='0' x2='1'>
        <stop offset='0' stopColor='#b06010' />
        <stop offset='1' stopColor='#1c0e00' />
      </linearGradient>
    </defs>
    <g transform='translate(732 480) scale(.3333)'>
      <path d='M327 332L313 290V250C313 195 350 156 402 155C432 155 458 170 474 192V232z' fill='url(#pie-blue)' />
      <path d='M328 288C308 240 345 196 400 195C422 195 440 200 450 209z' fill='#7fbbe2' />
      <path d='M328 288L474 192V234L404 284V290L328 332z' fill='url(#pie-cut)' />
      <path d='M420 252L492 198C502 210 511 230 511 252z' fill='#bf6a06' />
      <path d='M440 250L492 234L505 250z' fill='#ff9a30' />
      <path d='M492 198V236L440 252' fill='none' stroke='#8f4b00' strokeWidth='3' />
      <path d='M420 252H511V291H420z' fill='url(#pie-orange)' stroke='#b86200' strokeWidth='3' />
      <path d='M335 312V353C350 380 378 397 412 397C460 397 503 365 503 310V265z' fill='url(#pie-red)' />
      <path d='M335 312L412 265H503C503 318 460 356 412 356C378 356 350 340 335 312z' fill='#b65462' />
      <path d='M345 322L412 306H492C475 340 445 354 412 354C382 354 358 342 345 322z' fill='#f8818e' />
      <path d='M412 265V306L345 322M412 306H494' fill='none' stroke='#8c3a48' strokeWidth='3' />
      <path d='M225 139H323L354 173M505 224L537 208H638M436 372L467 439H638' fill='none' stroke='#000' strokeWidth='3' />
    </g>
    <text x='749' y='532' style={percentFont}>
      48,28%
    </text>
    <text x='946' y='555' style={percentFont}>
      10,34%
    </text>
    <text x='946' y='632' style={percentFont}>
      41,38%
    </text>
  </ChartSvg>
);

const Cube = ({ color }) => (
  <svg width='18' height='18' viewBox='0 0 18 18' stroke='#808080' aria-hidden='true'>
    <path d='M.5 4.500L4.500 .5h13l-4 4z' fill={palette[color].top} />
    <path d='M13.500 4.500l4-4v13l-4 4z' fill={palette[color].side} />
    <rect x='.5' y='4.500' width='13' height='13' fill={palette[color].front} />
  </svg>
);

/* ---------- data ---------- */

const blankRows = (count) => Array.from({ length: count }, () => []);

const systemColumns = [{ width: 25 }, { label: 'Systemname' }];
const systemRows = [[<SystemsIcon key='i' />, 'CityLibrarySystem'], ...blankRows(4)];

const countColumns = [{ width: 25 }, { label: 'Date', width: 66 }, { label: 'Name' }];
const countRows = [
  ['A', 'CityLibrarySystemApp'],
  ['E', 'SecondEnhanProjCount'],
  ['A', 'CityLibrarySystemApp'],
  ['E', 'FirstEnhanProjCount'],
  ['A', 'CityLibrarySystemApp'],
  ['D', 'FirstDevProjCount'],
]
  .map(([tag, name]) => [<CountIcon key='i' tag={tag} />, '2009-05-20', name])
  .concat(blankRows(1));

const processColumns = [
  { width: 57 },
  { label: 'Interac.', width: 55 },
  { label: 'Batch', width: 55 },
  { label: 'Conver.', width: 55 },
  {},
];
const processRows = [
  ['EI', '3', '0', '0'],
  ['EO', '0', '0', '0'],
  ['EO', '0', '0', '0'],
  ['ILF', '0', '0', '0'],
  ['EIF', '0', '0', '0'],
  ['Sum', '3', '0', '0'],
  ...blankRows(3),
];

const pointColumns = [{ width: 57 }, { label: 'uFP', width: 55 }, {}];
const pointRows = ['EI', 'EO', 'EQ', 'ILF', 'EIF', 'Sum'].map((name) => [name, '0.0', '0.0']).concat(blankRows(3));

const detailColumns = [
  { width: 26 },
  { label: 'Name', width: 100 },
  { label: 'Func.Typ', width: 65 },
  { label: 'Complexity', width: 75 },
  { label: 'Enh.Typ', width: 100 },
  { label: 'Proc.Typ', width: 65 },
  { label: 'DETs' },
];
const detailRows = [
  [<GearIcon key='i' />, 'createBook', 'EI', 'AVERAGE', 'NOT CHANGED', 'Interactive', '5'],
  [<GearIcon key='i' />, 'deleteBook', 'EI', 'LOW', 'NOT CHANGED', 'Interactive', '5'],
  [<GearIcon key='i' />, 'changeBook', 'EI', 'HIGH', 'NOT CHANGED', 'Interactive', '5'],
  [<TableIcon key='i' />, 'Book', 'ILF', 'HIGH', 'NOT CHANGED', 'Not appli...', '51'],
  ...blankRows(1),
];

/* ---------- page ---------- */

export default function App() {
  return (
    <Window>
      <GlobalStyle />
      <TitleBar>
        <LogoIcon />
        <TitleText>Function Point Modeler</TitleText>
        <TitleButton aria-label='Minimize window'>
          <svg width='8' height='8'>
            <path d='M1 6h4' stroke='#fff' strokeWidth='2' />
          </svg>
        </TitleButton>
        <TitleButton aria-label='Maximize window'>
          <svg width='8' height='8'>
            <rect x='1' y='1.500' width='6' height='5' fill='none' stroke='#fff' />
          </svg>
        </TitleButton>
        <TitleButton $close aria-label='Close window'>
          <svg width='8' height='8'>
            <path d='M1 1l6 6M7 1L1 7' stroke='#fff' strokeWidth='2' />
          </svg>
        </TitleButton>
      </TitleBar>
      <MenuBar>
        {['File', 'Edit', 'Diagram', 'Project', 'Window', 'Help'].map((name) => (
          <MenuItem key={name}>{name}</MenuItem>
        ))}
      </MenuBar>

      <CoolBar>
        <Bars>
          <BarRow>
            <Grip />
            <ToolMenu label='New' icon={<NewIcon />} raised />
            <Tool aria-label='Save'>
              <SaveIcon />
            </Tool>
            <Tool aria-label='Print'>
              <PrintIcon />
            </Tool>
          </BarRow>
          <FormatBar />
          <BarRow>
            <Grip />
            <ToolMenu label='Next annotation' icon={<PageArrowIcon />} muted />
            <ToolMenu label='Previous annotation' icon={<PageArrowIcon up />} muted />
            <Grip $end />
            <Tool aria-label='Last edit location'>
              <BackIcon />
            </Tool>
          </BarRow>
          <FormatBar />
        </Bars>
        <svg width='38' height='99' viewBox='0 0 38 99' aria-hidden='true'>
          <path d='M0 95.500C22 93 16 2.500 38 2.500' fill='none' stroke='#fff' />
        </svg>
        <Perspectives>
          <PerspectiveRow>
            <OpenPerspectiveIcon />
            <PerspectiveButton>
              <ReportIcon />
              Report Design
            </PerspectiveButton>
          </PerspectiveRow>
          <PerspectiveButton $active>
            <LifeCycleIcon />
            LifeCycle
          </PerspectiveButton>
          <PerspectiveButton>
            <LogoIcon />
            Functionpoint
          </PerspectiveButton>
          <Ring $x={-23} $y={8} $w={166} $h={66} />
        </Perspectives>
      </CoolBar>

      <Workbench>
        <MainArea>
          <TopRow>
            <Navigator>
              <Panel>
                <PanelHead>
                  <ActiveTab icon={<SystemsIcon />} label='Application Systems' />
                  <HeadButtons />
                </PanelHead>
                <FindRow>
                  <label htmlFor='find'>Find:</label>
                  <FindInput id='find' />
                  <ClearButton aria-label='Clear'>
                    <svg width='12' height='11' viewBox='0 0 12 11'>
                      <path d='M2 1.500l8 8M10 1.500l-8 8' stroke='#55534c' strokeWidth='4' />
                      <path d='M2 1.500l8 8M10 1.500l-8 8' stroke='#a6a49b' strokeWidth='2' />
                    </svg>
                  </ClearButton>
                </FindRow>
                <ListBox $height={120} $gap={0}>
                  <ListRow>
                    <ListClip>
                      <Grid columns={systemColumns} rows={systemRows} selected={0} />
                    </ListClip>
                  </ListRow>
                  <ListFoot>
                    <ScrollBar size={70} />
                  </ListFoot>
                </ListBox>
                <Ring $x={2} $y={64} $w={176} $h={44} />
                <Note $x={3} $y={116} $indent={6}>
                  Application Systems in your company
                </Note>
              </Panel>

              <Panel>
                <PanelHead>
                  <ActiveTab icon={<CountIcon />} label='Lifecycle Counts' />
                  <HeadButtons />
                </PanelHead>
                <ListBox $height={145} $gap={2}>
                  <ListRow>
                    <ListClip>
                      <Grid columns={countColumns} rows={countRows} selected={3} sorted={1} />
                    </ListClip>
                    <ScrollBar vertical start={25} size={69} />
                  </ListRow>
                  <ListFoot>
                    <ScrollBar size={42} />
                    <ScrollCorner />
                  </ListFoot>
                </ListBox>
                <Ring $x={7} $y={44} $w={198} $h={127} />
                <Note $x={158} $y={30}>
                  Counts of selected
                  <br />
                  application system
                </Note>
              </Panel>
            </Navigator>

            <Panel $grow>
              <PanelHead>
                <ActiveTab icon={<OverviewIcon />} label='System Overview' blue />
                <HeadButtons />
              </PanelHead>
              <EditorBody>
                <EditorMain>
                  <EditorPage>
                    <SectionRow>
                      <FormSection $width={357}>
                        <PreviousEdge />
                        <SectionTitle>Process Overview per Process Typ</SectionTitle>
                        <SectionTable $height={148}>
                          <Grid dense columns={processColumns} rows={processRows} sumRow={5} />
                        </SectionTable>
                      </FormSection>
                      <FormSection $width={357}>
                        <PreviousEdge />
                        <SectionTitle>Process Overview per</SectionTitle>
                        <SectionTable $height={148}>
                          <Grid dense columns={pointColumns} rows={pointRows} sumRow={5} />
                        </SectionTable>
                      </FormSection>
                    </SectionRow>
                    <FormSection $width={719}>
                      <SectionTitle>Process Details</SectionTitle>
                      <SectionTable $height={98}>
                        <Grid columns={detailColumns} rows={detailRows} />
                      </SectionTable>
                    </FormSection>
                  </EditorPage>
                  <ScrollBar vertical start={52} size={47} />
                </EditorMain>
                <ListFoot>
                  <ScrollBar size={67} />
                  <ScrollCorner />
                </ListFoot>
              </EditorBody>
            </Panel>
          </TopRow>

          <Panel>
            <PanelHead>
              <Tab>
                <PropertiesIcon />
                <TabLabel>Properties</TabLabel>
              </Tab>
              <ActiveTab icon={<LifecycleTabIcon />} label='System Lifecycle' divided />
              <HeadButtons />
            </PanelHead>
            <ChartPaper $tight>
              <Frame $double>
                <InnerFrame>
                  <LifecycleChart />
                </InnerFrame>
              </Frame>
            </ChartPaper>
          </Panel>
        </MainArea>

        <ChartColumn>
          <Panel>
            <PanelHead>
              <ActiveTab icon={<GearsIcon />} label='Function Type' />
              <HeadButtons />
            </PanelHead>
            <ChartPaper>
              <Frame>
                <FunctionChart />
              </Frame>
            </ChartPaper>
          </Panel>
          <Panel>
            <PanelHead>
              <ActiveTab icon={<ProcessIcon />} label='Process Type' />
              <HeadButtons />
            </PanelHead>
            <ChartPaper>
              <Frame>
                <ProcessChart />
              </Frame>
            </ChartPaper>
          </Panel>
          <Panel>
            <PanelHead>
              <ActiveTab icon={<ComplexityIcon />} label='Complexity' />
              <Tab $last>
                <EnhancementIcon />
                <TabLabel>Enhancement Typ</TabLabel>
              </Tab>
              <HeadButtons />
            </PanelHead>
            <ChartPaper>
              <PieFrame>
                <PieArea>
                  <InnerFrame>
                    <PieChart />
                  </InnerFrame>
                </PieArea>
                <Legend>
                  <LegendItem>
                    <Cube color='orange' />
                    LOW
                  </LegendItem>
                  <LegendItem>
                    <Cube color='blue' />
                    AVERAGE
                  </LegendItem>
                  <LegendItem>
                    <Cube color='red' />
                    HIGH
                  </LegendItem>
                </Legend>
              </PieFrame>
            </ChartPaper>
          </Panel>
        </ChartColumn>
      </Workbench>

      <StatusBar>
        <StatusLeft>
          <Grip />
          <Tool aria-label='Fast view'>
            <StatusIcon />
          </Tool>
        </StatusLeft>
        <StatusRight>
          <Grip as='div' />
        </StatusRight>
      </StatusBar>
    </Window>
  );
}
